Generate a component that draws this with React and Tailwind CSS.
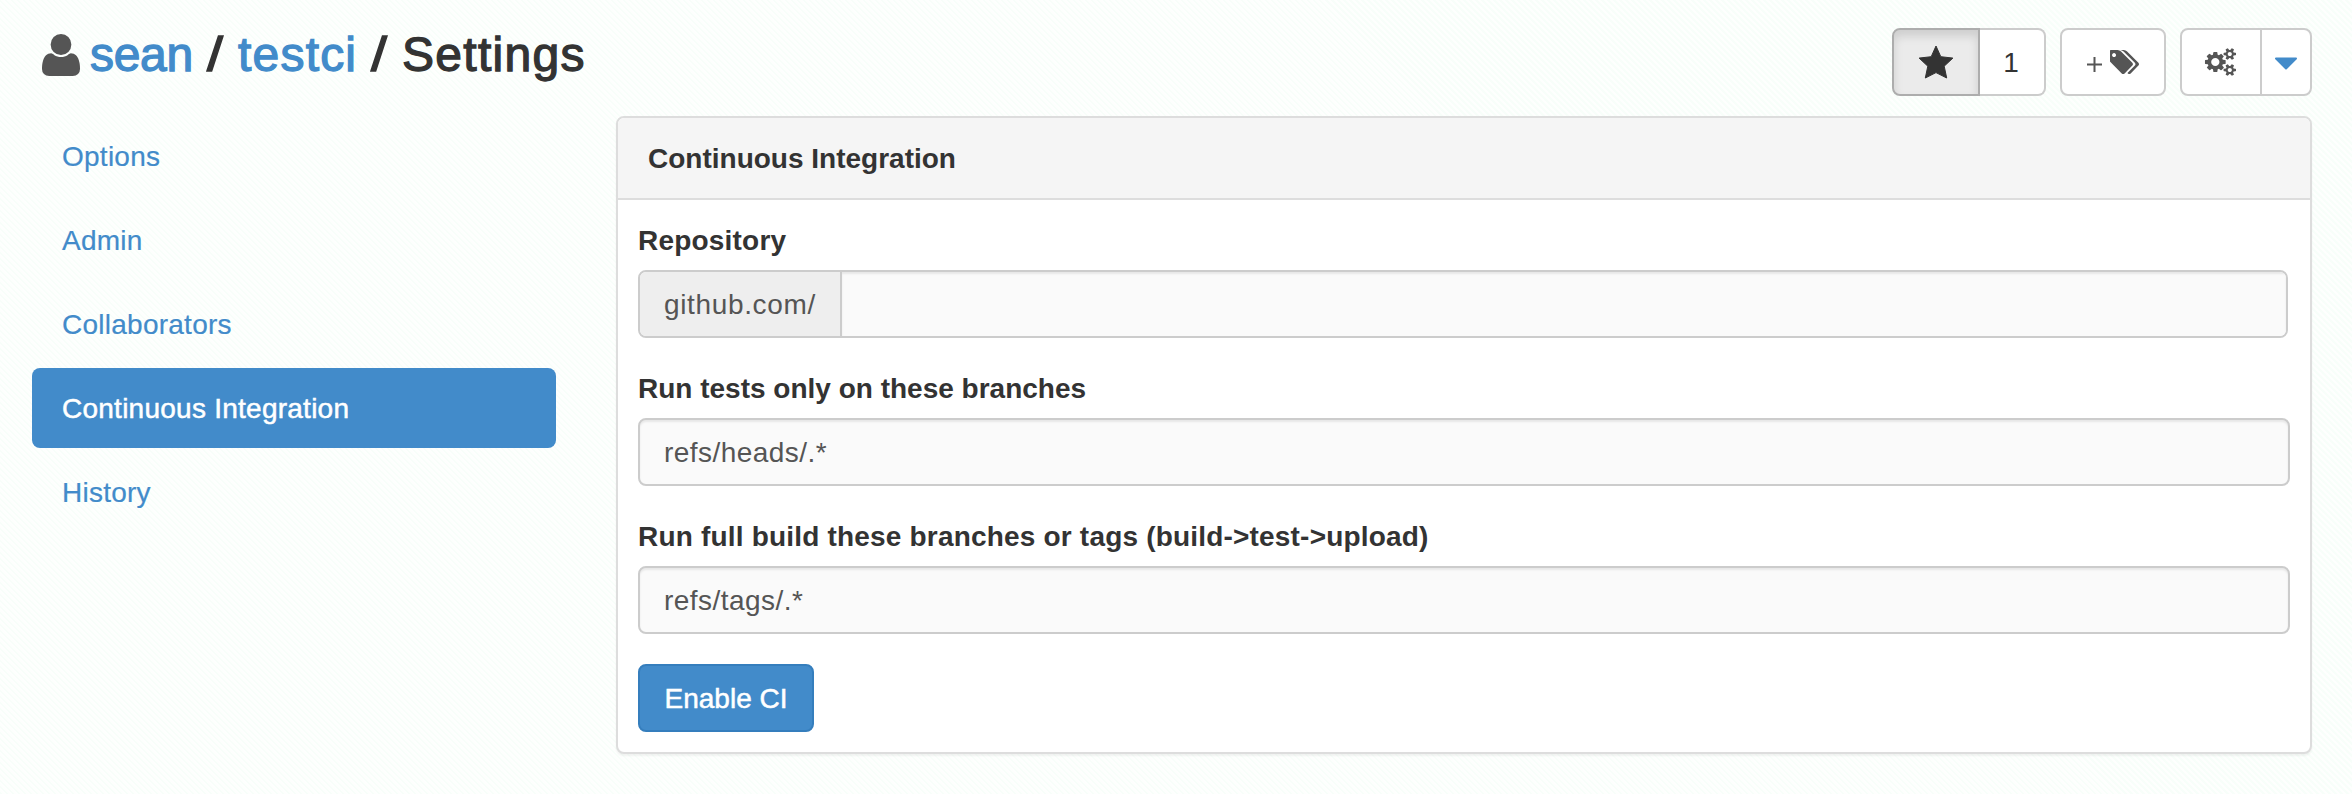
const USER =
  "M1600 1405q0 120-73 189.5t-194 69.5h-874q-121 0-194-69.5t-73-189.5q0-53 3.5-103.5t14-109 26.5-108.5 43-97.5 62-81 85.5-53.5 111.5-20q9 0 42 21.5t74.5 48 108 48 133.5 21.5 133.5-21.5 108-48 74.5-48 42-21.5q61 0 111.5 20t85.5 53.5 62 81 43 97.5 26.5 108.5 14 109 3.5 103.5zm-320-893q0 159-112.5 271.5t-271.5 112.5-271.5-112.5-112.5-271.5 112.5-271.5 271.5-112.5 271.5 112.5 112.5 271.5z";
const TAGS =
  "M384 448q0-53-37.5-90.5t-90.5-37.5-90.5 37.5-37.5 90.5 37.5 90.5 90.5 37.5 90.5-37.5 37.5-90.5zm1067 576q0 53-37 90l-491 492q-39 37-91 37-53 0-90-37l-715-716q-38-37-64.5-101t-26.5-117v-416q0-52 38-90t90-38h416q53 0 117 26.5t102 64.5l715 714q37 39 37 91zm384 0q0 53-37 90l-491 492q-39 37-91 37-36 0-59-14t-53-45l470-470q37-37 37-90 0-52-37-91l-715-714q-38-38-102-64.5t-117-26.5h224q53 0 117 26.5t102 64.5l715 714q37 39 37 91z";
const SMALL_COG =
  "v140q0 16-149 31-12 27-30 52 51 113 51 138 0 4-4 7-122 71-124 71-8 0-46-47t-52-68q-20 2-30 2t-30-2q-14 21-52 68t-46 47q-2 0-124-71-4-3-4-7 0-25 51-138-18-25-30-52-149-15-149-31v-140q0-16 149-31 13-29 30-52-51-113-51-138 0-4 4-7 4-2 35-20t59-34 30-16q8 0 46 46.5t52 67.5q20-2 30-2t30 2q51-71 92-112l6-2q4 0 124 70 4 3 4 7 0 25-51 138 17 23 30 52 149 15 149 31z";
const COGS =
  "M832 896q0-106-75-181t-181-75-181 75-75 181 75 181 181 75 181-75 75-181zm768 512q0-52-38-90t-90-38-90 38-38 90q0 53 37.5 90.5t90.5 37.5 90.5-37.5 37.5-90.5zm0-1024q0-52-38-90t-90-38-90 38-38 90q0 53 37.5 90.5t90.5 37.5 90.5-37.5 37.5-90.5zm-384 421v185q0 10-7 19.5t-16 10.5l-155 24q-11 35-32 76 34 48 90 115 7 11 7 20 0 12-7 19-23 30-82.5 89.5t-78.5 59.5q-11 0-21-7l-115-90q-37 19-77 31-11 108-23 155-7 24-30 24h-186q-11 0-20-7.5t-10-17.5l-23-153q-34-10-75-31l-118 89q-7 7-20 7-11 0-21-8-144-133-144-160 0-9 7-19 10-14 41-53t47-61q-23-44-35-82l-152-24q-10-1-17-9.5t-7-19.5v-185q0-10 7-19.5t16-10.5l155-24q11-35 32-76-34-48-90-115-7-11-7-20 0-12 7-20 22-30 82-89t79-59q11 0 21 7l115 90q34-18 77-32 11-108 23-154 7-24 30-24h186q11 0 20 7.5t10 17.5l23 153q34 10 75 31l118-89q8-7 20-7 11 0 21 8 144 133 144 160 0 8-7 19-12 16-42 54t-45 60q23 48 34 82l152 23q10 2 17 10.5t7 19.5zm640 533" +
  SMALL_COG +
  "m0-1024" +
  SMALL_COG;

const NAV = ["Options", "Admin", "Collaborators", "Continuous Integration", "History"];

function Title() {
  return (
    <h1 className="flex items-start text-[48px] leading-[54px] font-normal whitespace-nowrap text-[#333] [-webkit-text-stroke:1.3px_currentColor]">
      <svg className="mt-[6px] h-[42px] w-[38px]" viewBox="192 128 1408 1536" preserveAspectRatio="none" fill="#555" stroke="none">
        <path d={USER} />
      </svg>
      <a className="ml-[10px] w-[117px] tracking-[-0.3px] text-[#428bca]">sean</a>
      <span className="w-[31px] origin-left scale-x-[1.2]">/</span>
      <a className="w-[133px] tracking-[1.2px] text-[#428bca]">testci</a>
      <span className="w-[31px] origin-left scale-x-[1.2]">/</span>
      <span className="tracking-[1.3px]">Settings</span>
    </h1>
  );
}

function Toolbar() {
  return (
    <div className="flex h-[68px] gap-[14px] text-[28px] text-[#333]">
      <div className="flex w-[154px]">
        <button className="flex w-[88px] items-center justify-center rounded-l-lg border-2 border-[#adadad] bg-[#ebebeb] shadow-[inset_0_6px_10px_rgba(0,0,0,0.125)]">
          <svg className="h-[34px] w-[36px]" viewBox="0 0 36 34" fill="#333" stroke="#333" strokeLinejoin="round">
            <path d="M18 1 L22.8 11.7 L34.9 13.1 L26.2 21.2 L28.7 33 L18 27.6 L7.3 33 L9.8 21.2 L1.1 13.1 L13.2 11.7 Z" />
          </svg>
        </button>
        <button className="flex flex-1 items-center justify-center rounded-r-lg border-2 border-l-0 border-[#ccc] bg-white pt-[2px] pr-[2px]">1</button>
      </div>
      <button className="flex w-[106px] items-center rounded-lg border-2 border-[#ccc] bg-white pl-[25px]">
        <svg className="mt-[5px] h-[15px] w-[15px]" viewBox="0 0 15 15" stroke="#555" strokeWidth="2">
          <path d="M0 7.5H15M7.5 0V15" />
        </svg>
        <svg className="ml-[8px] h-[24px] w-[29px]" viewBox="0 128 1835 1515" preserveAspectRatio="none" fill="#555">
          <path d={TAGS} />
        </svg>
      </button>
      <div className="flex w-[132px] rounded-lg border-2 border-[#ccc] bg-white">
        <button className="flex w-[80px] items-center justify-center border-r-2 border-[#ccc]">
          <svg className="mr-px h-[28px] w-[30px] overflow-visible" viewBox="0 0 1856 1792" preserveAspectRatio="none" fill="#555">
            <path d={COGS} />
          </svg>
        </button>
        <button className="flex flex-1 items-center justify-center">
          <svg className="mt-[3px] h-[13px] w-[22px]" viewBox="0 0 22 13" fill="#428bca" stroke="#428bca" strokeWidth="2" strokeLinejoin="round">
            <path d="M1 1.5H21L11 11.5Z" />
          </svg>
        </button>
      </div>
    </div>
  );
}

function Field({ label, children }) {
  return (
    <div className="flex flex-col">
      <label className="mb-[9px] h-[40px] text-[28px] leading-[40px] font-bold">{label}</label>
      {children}
    </div>
  );
}

function TextBox({ value }) {
  return (
    <div className="mb-[31px] flex h-[68px] items-center rounded-lg border-2 border-[#ccc] bg-[#fafafa] px-[24px] pt-[2px] text-[28px] tracking-[0.45px] text-[#555] shadow-[inset_0_2px_2px_rgba(0,0,0,0.075)]">
      {value}
    </div>
  );
}

export default function App() {
  return (
    <div
      className="h-[794px] w-[2352px] overflow-hidden bg-[#fdfffd] bg-[repeating-linear-gradient(45deg,#f8fefa_0px,#f8fefa_2px,#fdfffd_2px,#fefffe_4.243px)] text-[#333]"
      style={{ fontFamily: '"Liberation Sans", Arial, sans-serif' }}
    >
      <header className="flex h-[116px] items-start justify-between pt-[28px] pr-[40px] pl-[42px]">
        <Title />
        <Toolbar />
      </header>
      <div className="flex items-start gap-[60px] pr-[40px] pl-[32px]">
        <nav className="flex w-[524px] flex-col gap-1 text-[28px] tracking-[0.25px]">
          {NAV.map((item) => (
            <a
              key={item}
              className={
                item === "Continuous Integration"
                  ? "flex h-[80px] items-center rounded-lg bg-[#428bca] pt-[2px] pl-[30px] text-white [-webkit-text-stroke:0.5px_white]"
                  : "flex h-[80px] items-center pt-[2px] pl-[30px] text-[#428bca] [-webkit-text-stroke:0.2px_#428bca]"
              }
            >
              {item}
            </a>
          ))}
        </nav>
        <section className="h-[638px] flex-1 rounded-lg border-2 border-[#ddd] bg-white shadow-[0_2px_2px_rgba(0,0,0,0.05)]">
          <h2 className="flex h-[82px] items-center rounded-t-md border-b-2 border-[#ddd] bg-[#f5f5f5] pt-[2px] pl-[30px] text-[28px] font-bold">
            Continuous Integration
          </h2>
          <div className="pt-[21px] pr-[20px] pl-[20px]">
            <Field label={<span className="tracking-[0.2px]">Repository</span>}>
              <div className="mr-[2px] mb-[31px] flex h-[68px] overflow-hidden rounded-lg border-2 border-[#ccc] text-[28px] text-[#555]">
                <span className="flex w-[202px] items-center border-r-2 border-[#ccc] bg-[#eee] pt-[2px] pl-[24px] tracking-[0.65px]">github.com/</span>
                <span className="flex-1 bg-[#fafafa] shadow-[inset_0_2px_2px_rgba(0,0,0,0.075)]" />
              </div>
            </Field>
            <Field label="Run tests only on these branches">
              <TextBox value="refs/heads/.*" />
            </Field>
            <Field label={<span className="tracking-[0.19px]">{"Run full build these branches or tags (build->test->upload)"}</span>}>
              <TextBox value="refs/tags/.*" />
            </Field>
            <button className="-mt-px h-[68px] w-[176px] rounded-lg border-2 border-[#357ebd] bg-[#428bca] pt-[2px] text-[28px] text-white [-webkit-text-stroke:0.5px_white]">
              Enable CI
            </button>
          </div>
        </section>
      </div>
    </div>
  );
}
